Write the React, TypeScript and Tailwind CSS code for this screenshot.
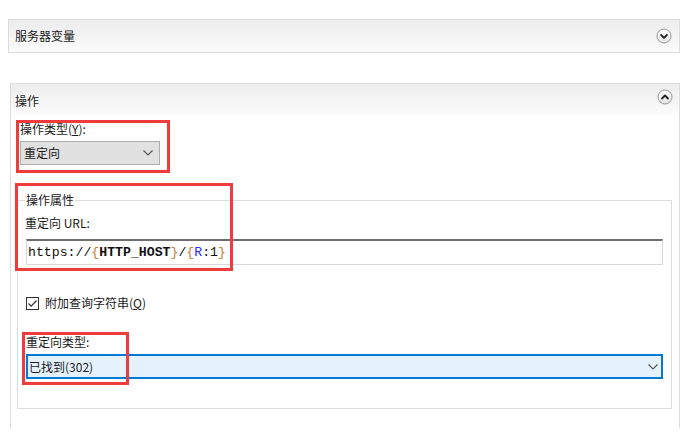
import React from "react";

const CJK = { fontFamily: '"Noto Sans CJK SC", "Noto Sans", sans-serif' };

function CircleChevron({ up }: { up?: boolean }) {
  return (
    <svg width="16" height="16" viewBox="0 0 16 16">
      <defs>
        <linearGradient id={up ? "cgu" : "cgd"} x1="0" y1="0" x2="0" y2="1">
          <stop offset="0" stopColor="#ffffff" />
          <stop offset="1" stopColor="#e2e2e2" />
        </linearGradient>
      </defs>
      <circle cx="8" cy="8" r="7" fill={`url(#${up ? "cgu" : "cgd"})`} stroke="#9a9a9a" strokeWidth="1" />
      {up ? (
        <path d="M5 9.5 L8 6.5 L11 9.5" fill="none" stroke="#222" strokeWidth="1.8" strokeLinecap="round" strokeLinejoin="round" />
      ) : (
        <path d="M5 6.8 L8 9.8 L11 6.8" fill="none" stroke="#222" strokeWidth="1.8" strokeLinecap="round" strokeLinejoin="round" />
      )}
    </svg>
  );
}

function SmallChevron() {
  return (
    <svg width="10" height="6" viewBox="0 0 10 6">
      <path d="M0.5 0.5 L5 5 L9.5 0.5" fill="none" stroke="#555" strokeWidth="1.1" />
    </svg>
  );
}

export default function App() {
  return (
    <div className="relative w-[693px] h-[441px] bg-white text-[12px] text-[#1a1a1a] overflow-hidden" style={CJK}>
      {/* Panel 1 */}
      <div className="mt-[19px] ml-[8px] w-[672px] h-[34px] border border-[#dcdcdc] bg-linear-to-b from-[#ececec] to-[#fbfbfb] flex items-center justify-between pl-[6px] pr-[7px]">
        <span className="leading-[16px]">服务器变量</span>
        <CircleChevron />
      </div>

      {/* Panel 2 */}
      <div className="mt-[30px] ml-[10px] w-[670px] h-[345px] border-x border-t border-[#dcdcdc] flex flex-col">
        <div className="h-[31px] bg-linear-to-b from-[#ececec] to-[#fcfcfc] flex items-center justify-between pl-[4px] pr-[6px] pt-[2px]">
          <span className="leading-[16px]">操作</span>
          <div className="-mt-[7px]">
            <CircleChevron up />
          </div>
        </div>

        <div className="pl-[9px] flex flex-col">
          <div className="mt-[6px] leading-[16px]">
            操作类型(<span className="underline">Y</span>):
          </div>
          <div className="mt-[4px] w-[140px] h-[24px] bg-[#e1e1e1] border border-[#adadad] flex items-center justify-between pl-[3px] pr-[6px]">
            <span className="text-[12px] leading-[16px]">重定向</span>
            <SmallChevron />
          </div>
        </div>

        <fieldset className="mt-[27px] ml-[6px] w-[653px] h-[217px] border border-[#dcdcdc] px-[8px]">
          <legend className="-ml-[1px] px-[1px] leading-[16px] text-[12px]">操作属性</legend>
          <div className="mt-[7px] leading-[16px] -ml-[1px]">重定向 URL:</div>
          <div className="mt-[8px] w-[637px] h-[26px] border border-[#d9d9d9] border-t-2 border-t-[#6e6e6e] flex items-center pl-[1px]">
            <span className="text-[13.2px] leading-[16px] whitespace-pre text-[#111]" style={{ fontFamily: '"Liberation Mono", "Courier New", monospace' }}>
              <span>https://</span>
              <span className="text-[#c8802a]">{"{"}</span>
              <span className="font-bold">HTTP_HOST</span>
              <span className="text-[#c8802a]">{"}"}</span>
              <span>/</span>
              <span className="text-[#c8802a]">{"{"}</span>
              <span className="text-[#2b2bff]">R</span>
              <span>:1</span>
              <span className="text-[#c8802a]">{"}"}</span>
            </span>
          </div>
          <div className="mt-[30px] flex items-center gap-[6px] leading-[16px]">
            <div className="w-[13px] h-[13px] border border-[#333] flex items-center justify-center bg-white">
              <svg width="11" height="11" viewBox="0 0 11 11">
                <path d="M1.5 5.5 L4.2 8.2 L9.5 2.5" fill="none" stroke="#333" strokeWidth="1.2" />
              </svg>
            </div>
            <span className="text-[12px]">
              附加查询字符串(<span className="underline">Q</span>)
            </span>
          </div>
          <div className="mt-[23px] leading-[16px]">重定向类型:</div>
          <div className="mt-[4px] w-[637px] h-[25px] bg-[#e5f1fb] border-2 border-[#0078d7] flex items-center justify-between pl-[1px] pr-[3px]">
            <span className="text-[12px] leading-[16px]">已找到(302)</span>
            <SmallChevron />
          </div>
        </fieldset>
      </div>

      {/* Annotation boxes */}
      <div className="absolute left-[16px] top-[120px] w-[154px] h-[53px] border-[3px] border-[#ef3b3b]" />
      <div className="absolute left-[15px] top-[183px] w-[218px] h-[88px] border-[3px] border-[#ef3b3b]" />
      <div className="absolute left-[22px] top-[332px] w-[107px] h-[53px] border-[3px] border-[#ef3b3b]" />
    </div>
  );
}
